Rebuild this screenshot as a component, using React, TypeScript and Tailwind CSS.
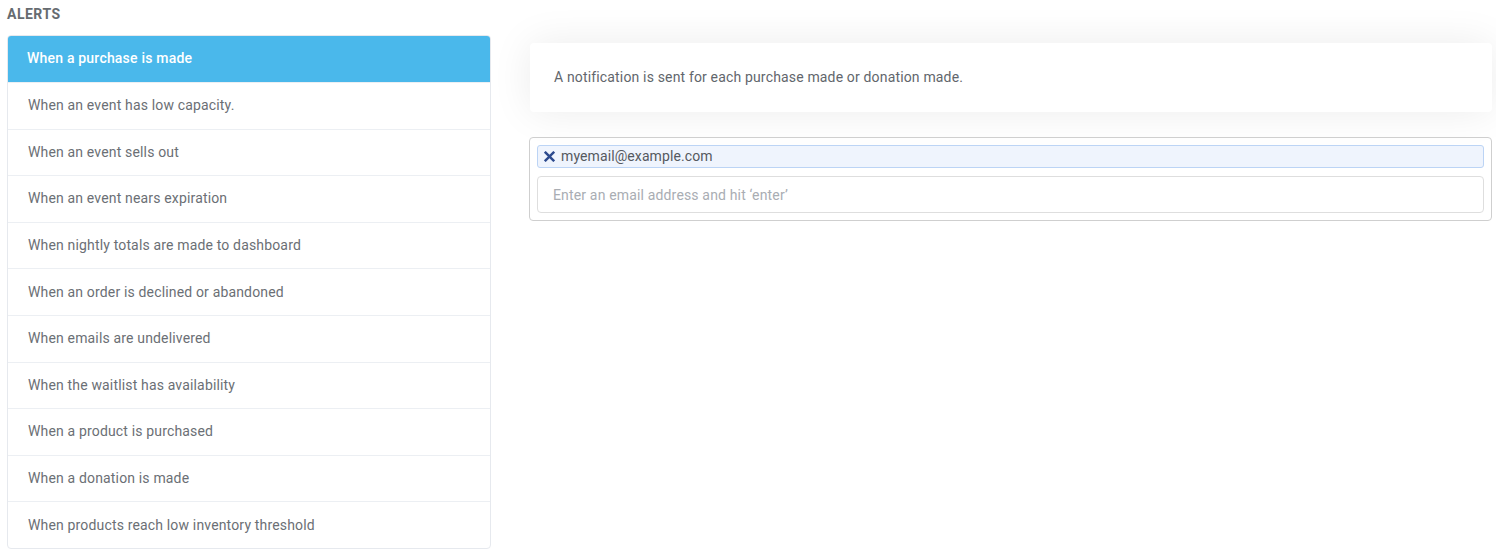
import React from "react";

const items = [
  "When a purchase is made",
  "When an event has low capacity.",
  "When an event sells out",
  "When an event nears expiration",
  "When nightly totals are made to dashboard",
  "When an order is declined or abandoned",
  "When emails are undelivered",
  "When the waitlist has availability",
  "When a product is purchased",
  "When a donation is made",
  "When products reach low inventory threshold",
];

export default function App() {
  return (
    <div
      className="w-[1496px] h-[554px] bg-white overflow-hidden"
      style={{ fontFamily: "Roboto, 'Liberation Sans', sans-serif" }}
    >
      <div className="pl-[7px] pt-[6px] h-[22px] text-[14px] leading-[16px] font-bold text-[#666b70] tracking-[0.5px]">
        ALERTS
      </div>
      <div className="flex pl-[7px] pt-[13px] pr-[4px] gap-[38px]">
        <div className="w-[484px] shrink-0 rounded-[4px] border border-[#e6e9ee] overflow-hidden">
          {items.map((t, i) => (
            <div
              key={t}
              className={
                i === 0
                  ? "h-[47px] flex items-center pl-[20px] bg-[#4ab8eb] text-white text-[14px] font-medium tracking-[0.2px] -mx-px -mt-px"
                  : "h-[46.6px] flex items-center pl-[20px] border-t border-[#eceff3] text-[#6b6f75] text-[14px] tracking-[0.16px]"
              }
            >
              {t}
            </div>
          ))}
        </div>
        <div className="flex-1 pt-[8px]">
          <div className="ml-[1px] bg-white rounded-[4px] shadow-[0_0_40px_rgba(0,0,0,0.08)] px-[24px] py-[24px] text-[14px] leading-[21px] text-[#62666c] tracking-[0.16px]">
            A notification is sent for each purchase made or donation made.
          </div>
          <div className="mt-[25px] border border-[#cfcfcf] rounded-[4px] p-[7px] flex flex-col gap-[8px]">
            <div className="h-[23px] flex items-center gap-[6px] pl-[6px] bg-[#eff4fd] border border-[#bcd4f5] rounded-[3px]">
              <svg width="11" height="11" viewBox="0 0 10 10" className="shrink-0">
                <path d="M1.5 1.5 L8.5 8.5 M8.5 1.5 L1.5 8.5" stroke="#2c4a8e" strokeWidth="2.2" strokeLinecap="square" />
              </svg>
              <span className="text-[14px] text-[#55595f] tracking-[0.1px]">myemail@example.com</span>
            </div>
            <input
              className="h-[37px] border border-[#dedede] rounded-[4px] px-[15px] text-[14px] tracking-[0.16px] outline-none placeholder:text-[#a9adb3]"
              style={{ fontFamily: "Roboto, 'Liberation Sans', sans-serif" }}
              placeholder="Enter an email address and hit ‘enter’"
            />
          </div>
        </div>
      </div>
    </div>
  );
}
